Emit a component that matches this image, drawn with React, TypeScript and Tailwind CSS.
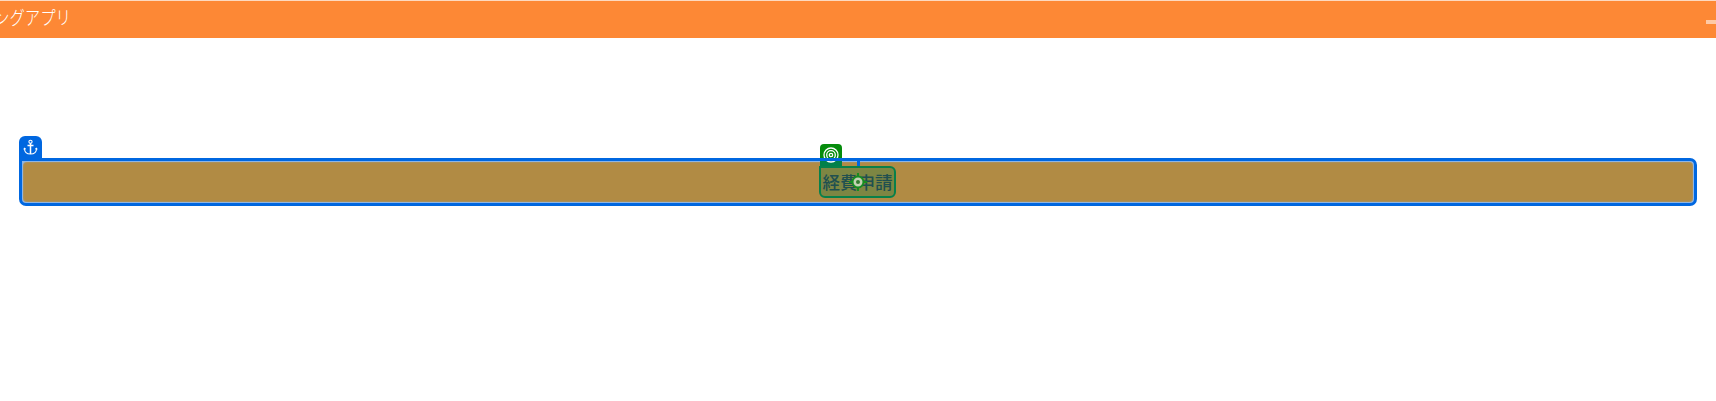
function AnchorIcon() {
  return (
    <svg width="15" height="17" viewBox="0 0 15 17" fill="none" stroke="white" strokeWidth="1.1">
      <circle cx="7.500" cy="2.800" r="1.600" />
      <path d="M7.500 4.500V15M4.500 6.500h6" strokeWidth="1.500" />
      <path d="M1.500 9.500C1.500 13 4 15 7.500 15S13.500 13 13.500 9.500M.8 10.600l.7-1.300 1.200.8M14.200 10.600l-.7-1.300-1.200.8" />
    </svg>
  );
}

function TargetIcon() {
  return (
    <svg width="16" height="16" viewBox="0 0 16 16" fill="none" stroke="white" strokeWidth="1.3">
      <circle cx="8" cy="8" r="7" />
      <circle cx="8" cy="8" r="4.3" />
      <circle cx="8" cy="8" r="1.7" />
    </svg>
  );
}

export default function App() {
  return (
    <div className="h-[401px] w-full overflow-hidden bg-white font-['Noto_Sans_CJK_JP',sans-serif]">
      <header className="flex h-[38px] items-start justify-between border-t border-[#fdd9c0] bg-[#fd8835]">
        <span className="mt-[3px] -ml-[6px] origin-left scale-x-[0.82] whitespace-nowrap text-[18.8px] leading-[26px] font-light text-white">
          ングアプリ
        </span>
        <span className="mt-[19px] h-1 w-[10px] bg-[#fec9a5]" />
      </header>
      <main className="px-[19px] pt-[120px]">
        <div className="relative flex h-12 items-center justify-center rounded-[7px] rounded-tl-none border-[3px] border-[#0067e0] bg-[#8fb5e3] p-px">
          <div className="h-full w-full rounded-[4px] bg-[#b18b44] shadow-[inset_0_0_2px_#a1a29a]" />
          <div className="absolute -top-[25px] -left-[3px] flex h-[23px] w-[23px] items-center justify-center rounded-t-[6px] bg-[#0067e0]">
            <AnchorIcon />
          </div>
          <div className="absolute -top-[17px] left-[798px] flex h-[23px] w-[22px] items-start justify-center rounded-t-[4px] bg-[linear-gradient(#058c0c_14px,#03804a_14px)] pt-[3px]">
            <TargetIcon />
          </div>
          <div className="absolute -top-[3px] left-[798px] h-[3px] w-[22px] bg-[#0067e0]" />
          <div className="absolute -top-[3px] left-[835px] h-[8px] w-[3px] bg-[#0067e0]" />
          <div className="absolute top-[5px] left-[797px] flex h-8 w-[77px] items-center justify-center rounded-[6px] rounded-tl-none border-2 border-[#08804a] bg-[#7d8643]">
            <span className="whitespace-nowrap text-[17.5px] leading-[26px] font-medium text-[#205050]">経費申請</span>
            <svg className="absolute top-[5px] left-[28px]" width="18" height="18" viewBox="0 0 18 18" fill="none">
              <path d="M9 0v3M9 15v3M0 9h3M15 9h3" stroke="#178c21" strokeWidth="2" />
              <circle cx="9" cy="9" r="5.500" fill="#c3d2b4" stroke="#178c21" strokeWidth="2" />
              <circle cx="9" cy="9" r="2" fill="#347d32" />
            </svg>
          </div>
        </div>
      </main>
    </div>
  );
}
